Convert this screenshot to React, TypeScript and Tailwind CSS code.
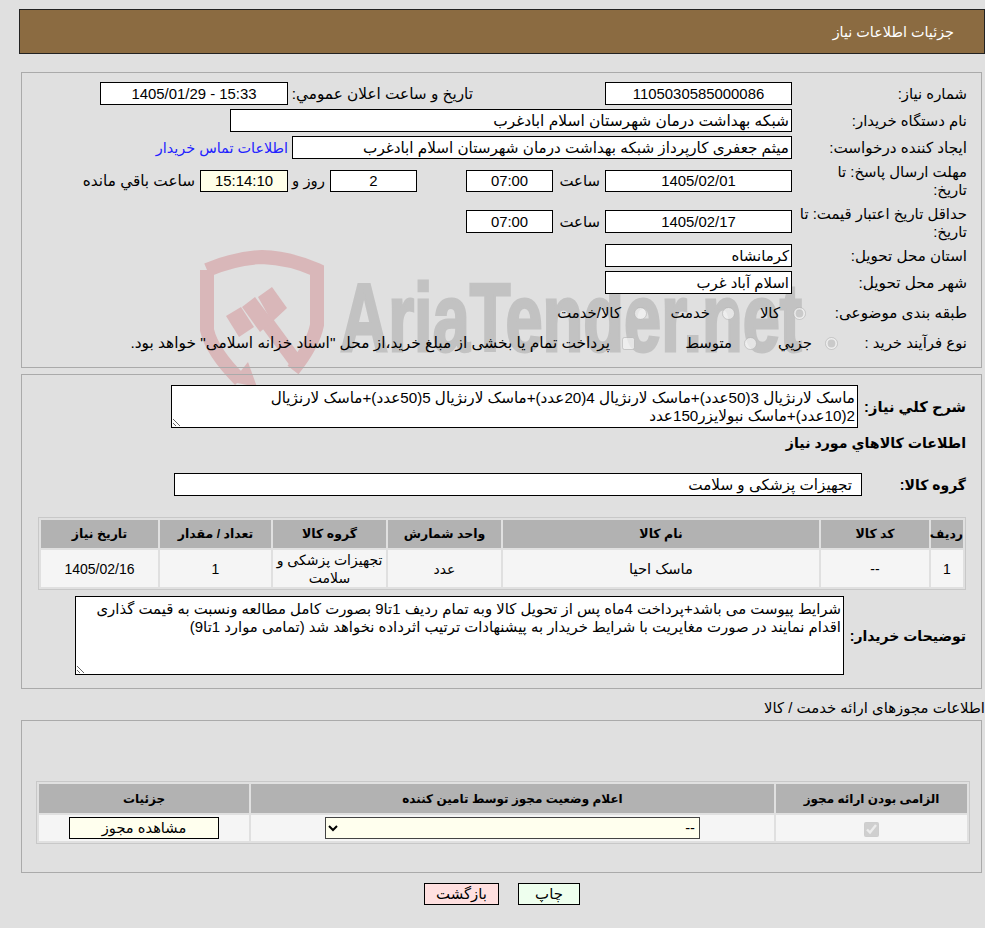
import React from "react";

const Box = ({ w, h = "h-[23px]", center = true, bg = "bg-white", children, pad = "pr-[2px]" }: { w: string; h?: string; center?: boolean; bg?: string; children: React.ReactNode; pad?: string }) => (
  <div className={`${w} ${h} ${bg} shrink-0 border border-black flex items-center ${center ? "justify-center" : `justify-start ${pad}`} whitespace-nowrap`}>{children}</div>
);

const Watermark = () => (
  <svg dir="ltr" className="absolute left-0 top-0 z-0" width="985" height="400" viewBox="0 0 985 400">
    <g fill="none" stroke="#d9b7b9" strokeWidth="14">
      <path d="M207 270 Q235 258 262 257 Q290 258 317 270 L317 325 Q313 345 293 370" />
      <path d="M207 270 L207 330 Q212 352 240 380" />
      <path d="M265 320 L296 362" />
    </g>
    <g fill="#d9b7b9">
      <polygon points="226,316 241,307 254,327 239,337" />
      <polygon points="242,307 255,297 273,321 260,332" />
      <polygon points="258,297 272,287 287,308 272,322" />
      <polygon points="248,362 232,382 257,387" />
    </g>
    <text x="340" y="351" fontFamily="'Liberation Sans', sans-serif" fontWeight="700" fontSize="96" fill="#c2c2c2" stroke="#c2c2c2" strokeWidth="3" textLength="462" lengthAdjust="spacingAndGlyphs" direction="ltr">AriaTender.net</text>
  </svg>
);

const Radio = ({ checked = false }: { checked?: boolean }) => (
  <input type="radio" disabled defaultChecked={checked} className="m-0 w-[13px] h-[13px] shrink-0" />
);

const th = "bg-[#b2b2b2] font-bold text-center p-0";
const td = "bg-[#f5f5f5] text-center p-0 text-[14px]";

export default function App() {
  return (
    <div dir="rtl" className="relative w-[985px] h-[928px] overflow-hidden bg-[#e0e0e0] text-black text-[14.9px] leading-[18px] font-['Liberation_Sans','DejaVu_Sans',sans-serif]">
      <Watermark />
      <div className="relative z-10 flex flex-col">
        <div className="mt-[9px] ml-[19px] h-[45px] bg-[#8b6b41] border border-[#222] flex items-center pr-[30px] text-white text-[14.4px]">جزئیات اطلاعات نیاز</div>

        <div className="mt-[18px] ml-[21px] mr-[3px] h-[296px] border border-[#aaa] pr-[14px] flex flex-col">
          <div className="mt-[9px] flex items-center">
            <div className="w-[175px] shrink-0">شماره نیاز:</div>
            <Box w="w-[187px]">1105030585000086</Box>
            <div className="w-[185px] mr-[132px] shrink-0 whitespace-nowrap text-[15.3px]">تاریخ و ساعت اعلان عمومي:</div>
            <Box w="w-[188px]">15:33 - 1405/01/29</Box>
          </div>
          <div className="mt-[4px] flex items-center">
            <div className="w-[175px] shrink-0">نام دستگاه خریدار:</div>
            <Box w="w-[562px]" center={false}><span className="text-[15.45px]">شبکه بهداشت درمان شهرستان اسلام ابادغرب</span></Box>
          </div>
          <div className="mt-[4px] flex items-center">
            <div className="w-[175px] shrink-0 text-[15.2px]">ایجاد کننده درخواست:</div>
            <Box w="w-[500px]" center={false}><span className="text-[15.2px]">میثم جعفری کارپرداز شبکه بهداشت درمان شهرستان اسلام ابادغرب</span></Box>
            <a className="mr-[4px] text-[#2222ff] whitespace-nowrap text-[14.4px]">اطلاعات تماس خریدار</a>
          </div>
          <div className="mt-[4px] h-[36px] flex items-center">
            <div className="w-[175px] shrink-0 pl-[2px]">مهلت ارسال پاسخ: تا<br />تاریخ:</div>
            <Box w="w-[187px]" h="h-[22px]">1405/02/01</Box>
            <div className="w-[52px] pr-[5px] shrink-0">ساعت</div>
            <Box w="w-[87px]" h="h-[22px]">07:00</Box>
            <div className="w-[49px] shrink-0" />
            <Box w="w-[87px]" h="h-[22px]">2</Box>
            <div className="w-[42px] pr-[5px] shrink-0 whitespace-nowrap">روز و</div>
            <Box w="w-[88px]" h="h-[22px]" bg="bg-[#ffffe8]">15:14:10</Box>
            <div className="mr-[5px] whitespace-nowrap text-[15.3px]">ساعت باقي مانده</div>
          </div>
          <div className="mt-[6px] h-[36px] flex items-center">
            <div className="w-[175px] shrink-0 pl-[2px]">حداقل تاریخ اعتبار قیمت: تا<br />تاریخ:</div>
            <div className="-mt-[3px] flex items-center">
              <Box w="w-[187px]">1405/02/17</Box>
              <div className="w-[52px] pr-[5px] shrink-0">ساعت</div>
              <Box w="w-[87px]">07:00</Box>
            </div>
          </div>
          <div className="mt-[3px] flex items-center">
            <div className="w-[175px] shrink-0 text-[15.1px]">استان محل تحویل:</div>
            <Box w="w-[187px]" center={false}>کرمانشاه</Box>
          </div>
          <div className="mt-[4px] flex items-center">
            <div className="w-[175px] shrink-0 text-[15.3px]">شهر محل تحویل:</div>
            <Box w="w-[187px]" center={false}>اسلام آباد غرب</Box>
          </div>
          <div className="mt-[8px] h-[22px] flex items-center">
            <div className="w-[161px] shrink-0 text-[15.2px]">طبقه بندی موضوعی:</div>
            <div className="w-[71px] shrink-0 flex items-center"><Radio checked /><span className="mr-[13px]">کالا</span></div>
            <div className="w-[88px] shrink-0 flex items-center"><Radio /><span className="mr-[12px]">خدمت</span></div>
            <div className="flex items-center"><Radio /><span className="mr-[13px]">کالا/خدمت</span></div>
          </div>
          <div className="mt-[8px] h-[22px] flex items-center">
            <div className="w-[129px] shrink-0">نوع فرآیند خرید :</div>
            <div className="w-[81px] shrink-0 flex items-center"><Radio checked /><span className="mr-[13px]">جزيي</span></div>
            <div className="w-[122px] shrink-0 flex items-center"><Radio /><span className="mr-[12px]">متوسط</span></div>
            <div className="flex items-center"><input type="checkbox" disabled className="m-0 w-[13px] h-[13px] shrink-0" /><span className="mr-[12px] whitespace-nowrap text-[15.4px]">پرداخت تمام یا بخشی از مبلغ خرید،از محل "اسناد خزانه اسلامی" خواهد بود.</span></div>
          </div>
        </div>

        <div className="mt-[6px] ml-[21px] mr-[3px] h-[315px] border border-[#aaa] pr-[15px] flex flex-col">
          <div className="mt-[10px] flex items-center">
            <div className="w-[108px] shrink-0 font-bold text-[14.67px]">شرح کلي نیاز:</div>
            <div className="w-[687px] h-[43px] bg-white border border-black px-[2px] py-[3px] resize overflow-auto text-[15.2px] whitespace-nowrap">ماسک لارنژیال 3(50عدد)+ماسک لارنژیال 4(20عدد)+ماسک لارنژیال 5(50عدد)+ماسک لارنژیال<br />2(10عدد)+ماسک نبولایزر150عدد</div>
          </div>
          <div className="mt-[5px] h-[20px] flex items-center font-bold text-[14.2px]">اطلاعات کالاهاي مورد نیاز</div>
          <div className="mt-[20px] flex items-center">
            <div className="w-[104px] shrink-0 font-bold text-[14px]">گروه کالا:</div>
            <Box w="w-[688px]" center={false} pad="pr-[9px]"><span className="text-[15.2px]">تجهیزات پزشکی و سلامت</span></Box>
          </div>
          <table className="mt-[21px] w-[928px] table-fixed border-separate border-spacing-[2px] border border-[#c8c8c8]">
            <colgroup>
              <col className="w-[32px]" /><col className="w-[108px]" /><col className="w-[316px]" /><col className="w-[113px]" /><col className="w-[113px]" /><col className="w-[111px]" /><col className="w-[117px]" />
            </colgroup>
            <thead>
              <tr className="h-[28px] text-[12.5px]">
                <th className={th}>رديف</th><th className={th}>کد کالا</th><th className={th}>نام کالا</th><th className={th}>واحد شمارش</th><th className={th}>گروه کالا</th><th className={th}>تعداد / مقدار</th><th className={th}>تاریخ نیاز</th>
              </tr>
            </thead>
            <tbody>
              <tr className="h-[37px]">
                <td className={td}>1</td><td className={td}>--</td><td className={td}><span className="text-[14.67px]">ماسک احیا</span></td><td className={td}>عدد</td><td className={td}>تجهیزات پزشکی و سلامت</td><td className={td}>1</td><td className={td}>1405/02/16</td>
              </tr>
            </tbody>
          </table>
          <div className="mt-[6px] flex items-center">
            <div className="w-[122px] shrink-0 font-bold whitespace-nowrap text-[14px]">توضیحات خریدار:</div>
            <div className="w-[769px] h-[79px] bg-white border border-black px-[2px] py-[3px] resize overflow-auto">شرایط پیوست می باشد+پرداخت 4ماه پس از تحویل کالا وبه تمام ردیف 1تا9 بصورت کامل مطالعه ونسبت به قیمت گذاری اقدام نمایند در صورت مغایریت با شرایط خریدار به پیشنهادات ترتیب اثرداده نخواهد شد (تمامی موارد 1تا9)</div>
          </div>
        </div>

        <div className="mt-[7px] h-[24px] flex items-center whitespace-nowrap">اطلاعات مجوزهای ارائه خدمت / کالا</div>

        <div className="ml-[21px] mr-[3px] h-[153px] border border-[#aaa] pr-[11px] flex flex-col">
          <table className="mt-[60px] w-[934px] table-fixed border-separate border-spacing-[2px] border border-[#c8c8c8]">
            <colgroup><col className="w-[191px]" /><col className="w-[523px]" /><col className="w-[210px]" /></colgroup>
            <thead>
              <tr className="h-[29px] text-[12px]">
                <th className={th}>الزامی بودن ارائه مجوز</th><th className={th}>اعلام وضعیت مجوز توسط تامین کننده</th><th className={th}>جزئیات</th>
              </tr>
            </thead>
            <tbody>
              <tr className="h-[26px]">
                <td className={td}><input type="checkbox" disabled defaultChecked className="m-0 align-middle w-[15px] h-[15px]" /></td>
                <td className={td}>
                  <select className="w-[375px] h-[22px] bg-[#ffffee] border border-[#444] align-middle text-[14.67px]" defaultValue="--"><option value="--">--</option></select>
                </td>
                <td className={td}>
                  <button className="w-[150px] h-[22px] bg-[#ffffee] border border-black align-middle text-[14.67px]">مشاهده مجوز</button>
                </td>
              </tr>
            </tbody>
          </table>
        </div>

        <div className="mt-[10px] pl-[19px] flex justify-center gap-[19px]">
          <button className="w-[62px] h-[22px] bg-[#eeffee] border border-black">چاپ</button>
          <button className="w-[75px] h-[22px] bg-[#ffe0e0] border border-black">بازگشت</button>
        </div>
      </div>
    </div>
  );
}
